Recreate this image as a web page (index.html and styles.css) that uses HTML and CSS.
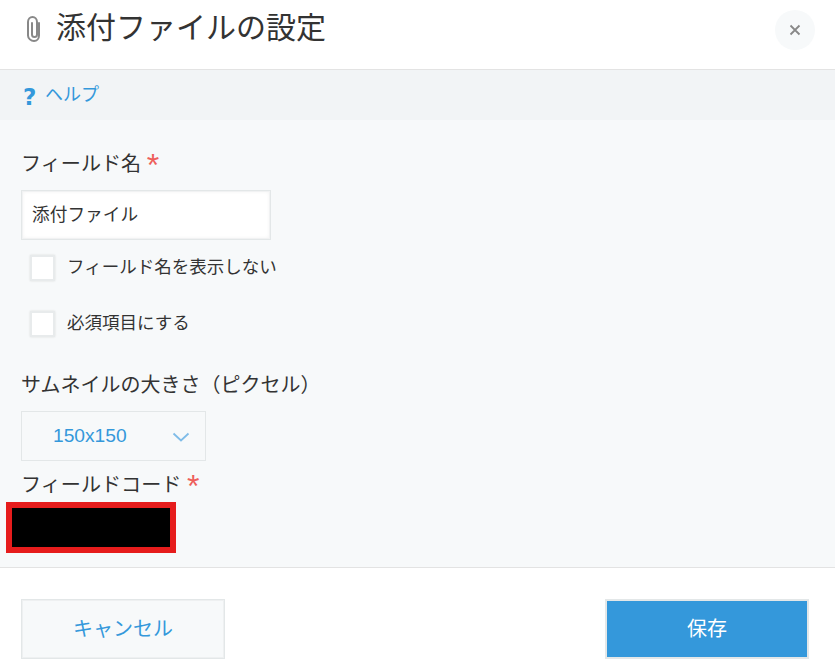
FILE: index.html
```html
<!DOCTYPE html>
<html lang="ja">
<head>
    <meta charset="UTF-8">
    <title>添付ファイルの設定</title>
    <link rel="stylesheet" href="styles.css">
</head>
<body>

    <header class="dialog-header">
        <svg class="clip-icon" width="18" height="28" viewBox="0 0 18 28" fill="none" stroke="#888" stroke-width="2" stroke-linecap="round">
            <path d="M14 8v12.500c0 3-2 5.500-5 5.500s-6-2.500-6-5.500V7c0-3 2-5 4.500-5S12 4 12 7v12.500c0 1.500-1 2.500-2.500 2.500S7 21 7 19.500V8"/>
        </svg>
        <h1>添付ファイルの設定</h1>
        <button class="close-btn" type="button">
            <svg width="12" height="12" viewBox="0 0 12 12" stroke="#888" stroke-width="1.800">
                <path d="M1.500 1.500l9 9M10.500 1.500l-9 9"/>
            </svg>
        </button>
    </header>

    <div class="help-bar">
        <span class="help-mark">?</span>
        <a href="#" class="help-link">ヘルプ</a>
    </div>

    <main class="dialog-body">
        <div class="field-label">フィールド名 <span class="required">*</span></div>
        <input class="text-input" type="text" value="添付ファイル">

        <label class="check-row">
            <span class="check-box"></span>
            <span>フィールド名を表示しない</span>
        </label>
        <label class="check-row">
            <span class="check-box"></span>
            <span>必須項目にする</span>
        </label>

        <div class="field-label thumb-label">サムネイルの大きさ（ピクセル）</div>
        <div class="select-box">
            <span class="select-value">150x150</span>
            <svg width="18" height="10" viewBox="0 0 18 10" fill="none" stroke="#7fbce8" stroke-width="1.800">
                <path d="M1.500 1.500L9 8.500l7.500-7"/>
            </svg>
        </div>

        <div class="field-label code-label">フィールドコード <span class="required">*</span></div>
        <div class="redacted"></div>
    </main>

    <footer class="dialog-footer">
        <button class="btn btn-cancel" type="button">キャンセル</button>
        <button class="btn btn-save" type="button">保存</button>
    </footer>

</body>
</html>
```

FILE: styles.css
```css
body {
    margin: 0;
    height: 672px;
    overflow: hidden;
    background-color: #fff;
    color: #333;
    font-family: "Liberation Sans", "Noto Sans CJK JP", sans-serif;
}
.dialog-header {
    height: 69px;
    border-bottom: 1px solid #e3e3e3;
    box-sizing: content-box;
    display: flex;
    align-items: flex-start;
    padding-left: 25px;
    padding-right: 20px;
}
.clip-icon {
    margin-top: 15px;
    margin-right: 13px;
}
.dialog-header h1 {
    margin: 8px 0 0 0;
    font-size: 30px;
    line-height: 40px;
    font-weight: normal;
}
.close-btn {
    margin-left: auto;
    margin-top: 10px;
    width: 40px;
    height: 40px;
    border: none;
    border-radius: 50%;
    background-color: #f7f9fa;
    padding: 0;
    display: flex;
    align-items: center;
    justify-content: center;
}
.help-bar {
    height: 50px;
    background-color: #f2f4f6;
    display: flex;
    align-items: center;
    padding-left: 23px;
}
.help-mark {
    width: 23px;
    font-family: "DejaVu Sans", sans-serif;
    font-size: 23px;
    font-weight: bold;
    line-height: 30px;
    color: #3498db;
    margin-top: 3px;
}
.help-link {
    color: #3498db;
    font-size: 18px;
    text-decoration: none;
    margin-top: -4px;
    margin-left: -1px;
}
.dialog-body {
    height: 447px;
    box-sizing: border-box;
    background-color: #f7f9fa;
    padding: 30px 21px 0 21px;
}
.field-label {
    font-size: 20.100px;
    line-height: 28px;
}
.required {
    color: #ee5f5b;
    font-size: 32px;
    line-height: 20px;
    vertical-align: -5px;
}
.text-input {
    display: block;
    box-sizing: border-box;
    width: 250px;
    height: 50px;
    margin-top: 12px;
    padding: 0 10px 4px 10px;
    border: 1px solid #e3e7e8;
    background-color: #fff;
    box-shadow: inset 0 0 0 1px #f1f2f3, inset 0 0 4px #eee;
    font: 17.700px/40px "Liberation Sans", "Noto Sans CJK JP", sans-serif;
    color: #333;
}
.check-row {
    display: flex;
    align-items: center;
    height: 26px;
    margin-left: 9px;
    font-size: 17.500px;
    margin-top: 16px;
    gap: 12px;
}
.text-input + .check-row {
    margin-top: 15px;
}
.check-row + .check-row {
    margin-top: 30px;
}
.check-row span:last-child {
    margin-top: -5px;
}
.check-box {
    box-sizing: border-box;
    width: 25px;
    height: 26px;
    border: 2px solid #e8ebec;
    background-color: #fff;
    box-shadow: 0 0 2px #ddd;
}
.thumb-label {
    margin-top: 34px;
    font-size: 20px;
}
.select-box {
    box-sizing: border-box;
    width: 185px;
    height: 50px;
    margin-top: 12px;
    border: 1px solid #e3e7e8;
    display: flex;
    align-items: center;
    padding-left: 31px;
    padding-right: 15px;
    justify-content: space-between;
}
.select-value {
    color: #3498db;
    font-size: 19.200px;
}
.select-box svg {
    margin-top: 2px;
}
.code-label {
    margin-top: 10px;
}
.redacted {
    box-sizing: border-box;
    width: 170px;
    height: 51px;
    margin-left: -15px;
    margin-top: 3px;
    border: 6px solid #e61c1c;
    background-color: #000;
}
.dialog-footer {
    border-top: 1px solid #e3e3e3;
    padding: 31px 26px 0 21px;
    display: flex;
    justify-content: space-between;
}
.btn {
    box-sizing: border-box;
    width: 204px;
    height: 60px;
    font: 20px/54px "Liberation Sans", "Noto Sans CJK JP", sans-serif;
    padding: 0 0 1px 0;
}
.btn-cancel {
    background-color: #f7f9fa;
    border: 1px solid #e3e7e8;
    box-shadow: inset 0 0 0 1px #eef0f1;
    color: #3498db;
}
.btn-save {
    background-color: #3498db;
    border: 2px solid #e3e7e8;
    color: #fff;
}
```
